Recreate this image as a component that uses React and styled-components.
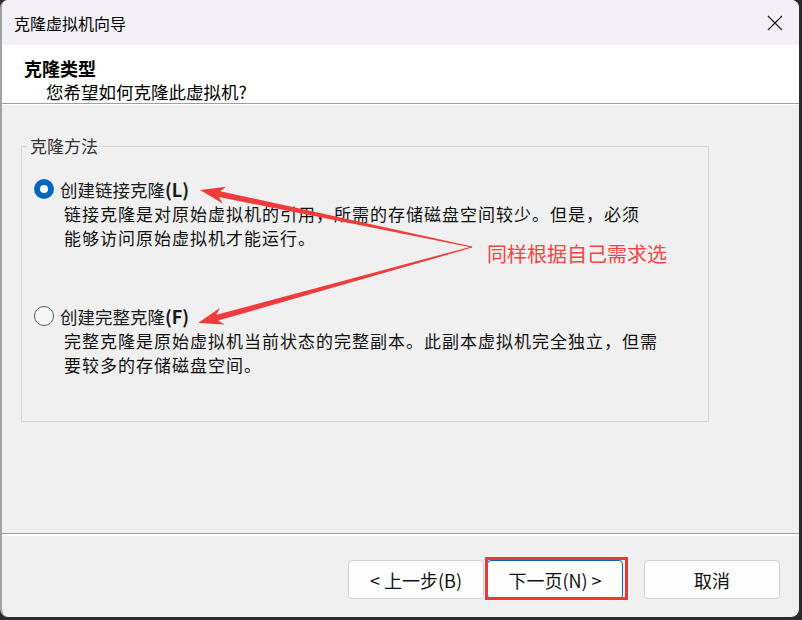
import React from "react"
import styled, { createGlobalStyle } from "styled-components"

const GlobalStyle = createGlobalStyle`
  body {
    margin: 0;
    background: #2b2b2b;
    font-family: "Noto Sans CJK SC", "Noto Sans", sans-serif;
  }
`

const Window = styled.div`
  position: relative;
  width: 799px;
  height: 617px;
  box-sizing: border-box;
  border-left: 2px solid #a3a3a3;
  border-radius: 8px;
  overflow: hidden;
  background: #f0f0f0;
  display: flex;
  flex-direction: column;
  color: #000;
`

const TitleBar = styled.div`
  height: 45px;
  flex: none;
  background: #f3f1f7;
  display: flex;
  align-items: center;
  justify-content: space-between;
  padding: 0 16px 0 12px;
  font-size: 16px;
`

const CloseButton = styled.div`
  width: 16px;
  height: 16px;
  display: flex;
  color: #1a1a1a;
`

const Header = styled.div`
  flex: none;
  height: 59px;
  box-sizing: border-box;
  background: #fff;
  padding: 11px 0 0 22px;
  border-bottom: 1px solid #a0a0a0;
  box-shadow: 0 1px 0 #fff;
`

const HeaderTitle = styled.div`
  font-size: 18px;
  font-weight: 700;
  line-height: 24px;
`

const HeaderSub = styled.div`
  font-size: 17.5px;
  line-height: 24px;
  padding-left: 22px;
`

const Body = styled.div`
  flex: 1;
  padding: 31px 0 0 19px;
`

const GroupBox = styled.fieldset`
  width: 688px;
  box-sizing: border-box;
  margin: 0;
  padding: 0;
  border: 1px solid #d6d6d6;
`

const Legend = styled.legend`
  margin-left: 5px;
  padding: 0 3px;
  font-size: 17px;
  line-height: 22px;
  color: #333;
`

const GroupInner = styled.div`
  height: 264px;
  padding: 20px 0 0 12px;
  box-sizing: border-box;
  display: flex;
  flex-direction: column;
  gap: 54px;
`

const Option = styled.div`
  display: flex;
  flex-direction: column;
`

const OptionRow = styled.label`
  display: flex;
  align-items: center;
  gap: 6px;
  height: 24px;
  font-size: 17.5px;
  color: #1a1a1a;
`

const AccessKey = styled.span`
  font-weight: 600;
  font-size: 18px;
`

const Radio = styled.span`
  width: 20px;
  height: 20px;
  box-sizing: border-box;
  border-radius: 50%;
  display: flex;
  align-items: center;
  justify-content: center;
  border: ${(p) => (p.$checked ? "none" : "1.5px solid #5c5c5c")};
  background: ${(p) => (p.$checked ? "#0067c0" : "#f7f7f7")};

  &::after {
    content: "";
    display: ${(p) => (p.$checked ? "block" : "none")};
    width: 8px;
    height: 8px;
    border-radius: 50%;
    background: #fff;
  }
`

const Desc = styled.div`
  margin: 1px 0 0 30px;
  font-size: 17px;
  letter-spacing: 1px;
  line-height: 24px;
  color: #111;
  width: 600px;
`

const Footer = styled.div`
  flex: none;
  height: 84px;
  box-sizing: border-box;
  border-top: 1px solid #a0a0a0;
  box-shadow: inset 0 1px 0 #fff, inset 0 2px 0 #fff;
  display: flex;
  justify-content: flex-end;
  align-items: flex-start;
  padding: 26px 19px 0 0;
`

const Button = styled.button`
  position: relative;
  width: 136px;
  height: 39px;
  margin-left: ${(p) => p.$gap || 0}px;
  border: 1px solid ${(p) => (p.$focused ? "#0067c0" : "#d0d0d0")};
  border-radius: 4px;
  background: #fdfdfd;
  font-family: "Noto Sans CJK SC", "Noto Sans", sans-serif;
  font-size: 18px;
  color: #111;
  padding: 0;

  &::after {
    content: "";
    display: ${(p) => (p.$marked ? "block" : "none")};
    position: absolute;
    top: -4px;
    left: -3px;
    right: -6px;
    bottom: -2px;
    border: 3px solid #e8383a;
  }
`

const Note = styled.div`
  position: absolute;
  left: 485px;
  top: 240px;
  font-size: 20px;
  line-height: 28px;
  color: #f04646;
`

const Overlay = styled.svg`
  position: absolute;
  left: 0;
  top: 0;
  pointer-events: none;
`

function arrowPoints([tx, ty], [hx, hy]) {
  const dx = hx - tx
  const dy = hy - ty
  const len = Math.hypot(dx, dy)
  const ux = dx / len
  const uy = dy / len
  const nx = -uy
  const ny = ux
  const p = (x, y) => `${x.toFixed(1)},${y.toFixed(1)}`
  const bx = hx - ux * 25
  const by = hy - uy * 25
  const sx = hx - ux * 20
  const sy = hy - uy * 20
  return [
    p(tx + nx * 0.6, ty + ny * 0.6),
    p(sx + nx * 3, sy + ny * 3),
    p(bx + nx * 8.5, by + ny * 8.5),
    p(hx, hy),
    p(bx - nx * 8.5, by - ny * 8.5),
    p(sx - nx * 3, sy - ny * 3),
    p(tx - nx * 0.6, ty - ny * 0.6),
  ].join(" ")
}

const options = [
  {
    label: "创建链接克隆",
    key: "L",
    checked: true,
    desc: ["链接克隆是对原始虚拟机的引用，所需的存储磁盘空间较少。但是，必须", "能够访问原始虚拟机才能运行。"],
  },
  {
    label: "创建完整克隆",
    key: "F",
    checked: false,
    desc: ["完整克隆是原始虚拟机当前状态的完整副本。此副本虚拟机完全独立，但需", "要较多的存储磁盘空间。"],
  },
]

export default function App() {
  return (
    <>
      <GlobalStyle />
      <Window>
        <TitleBar>
          <span>克隆虚拟机向导</span>
          <CloseButton>
            <svg width="16" height="16" viewBox="0 0 16 16">
              <path d="M1 1 L15 15 M15 1 L1 15" stroke="currentColor" strokeWidth="1.2" />
            </svg>
          </CloseButton>
        </TitleBar>
        <Header>
          <HeaderTitle>克隆类型</HeaderTitle>
          <HeaderSub>您希望如何克隆此虚拟机?</HeaderSub>
        </Header>
        <Body>
          <GroupBox>
            <Legend>克隆方法</Legend>
            <GroupInner>
              {options.map((o) => (
                <Option key={o.key}>
                  <OptionRow>
                    <Radio $checked={o.checked} />
                    <span>
                      {o.label}
                      <AccessKey>({o.key})</AccessKey>
                    </span>
                  </OptionRow>
                  <Desc>
                    {o.desc.map((line) => (
                      <div key={line}>{line}</div>
                    ))}
                  </Desc>
                </Option>
              ))}
            </GroupInner>
          </GroupBox>
        </Body>
        <Footer>
          <Button>&lt; 上一步(B)</Button>
          <Button $gap={3} $focused $marked>
            下一页(N) &gt;
          </Button>
          <Button $gap={21}>取消</Button>
        </Footer>
        <Note>同样根据自己需求选</Note>
        <Overlay width="799" height="617">
          <polygon points={arrowPoints([470, 247], [198, 190])} fill="#ef3b3b" />
          <polygon points={arrowPoints([470, 247], [196, 323])} fill="#ef3b3b" />
        </Overlay>
      </Window>
    </>
  )
}
